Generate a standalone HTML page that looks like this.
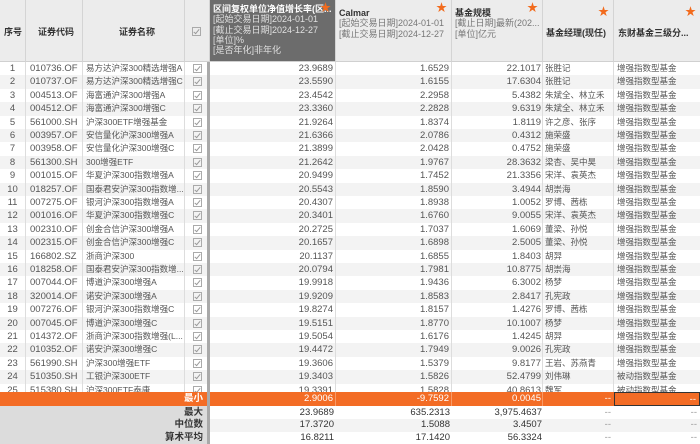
<!DOCTYPE html>
<html><head><meta charset="utf-8"><style>
*{margin:0;padding:0;box-sizing:border-box}
body{width:700px;height:444px;overflow:hidden;background:#fff;font-family:"Liberation Sans","Noto Sans CJK SC",sans-serif;font-size:9.5px;color:#555;position:relative}
.hd{position:absolute;top:0;height:62px;background:#ececec;border-right:1px solid #d4d4d4;border-bottom:1px solid #d0d0d0;white-space:nowrap;overflow:hidden;font-size:9px}
.hd b{font-weight:bold;color:#333}
.star{position:absolute;top:3px;right:4px;color:#f26b1d;font-size:11px}
.r{position:absolute;left:0;width:700px;height:13.4px;line-height:13.4px;white-space:nowrap}
.r span{position:absolute;top:0;height:100%;overflow:hidden}
.c0{left:0;width:26px;text-align:center;border-right:1px solid #ddd}
.c1{left:26px;width:57px;padding-left:4px;border-right:1px solid #ddd}
.c2{left:83px;width:102px;padding-left:3px;border-right:1px solid #ddd;font-size:8.5px}
.c3{left:185px;width:25px;border-right:3px solid #a9a9a9}
.c4{left:210px;width:126px;text-align:right;padding-right:2px;border-right:1px solid #ddd}
.c5{left:336px;width:116px;text-align:right;padding-right:2px;border-right:1px solid #ddd}
.c6{left:452px;width:91px;text-align:right;padding-right:1px;border-right:1px solid #ddd}
.c7{left:543px;width:71px;padding-left:2px;border-right:1px solid #ddd;font-size:8.5px}
.c8{left:614px;width:86px;padding-left:3px;font-size:8.5px}
.cb{display:inline-block;width:9px;height:9px;border:1px solid #aaa;margin:2px 0 0 8px;position:relative}
.cb:after{content:"";position:absolute;left:2px;top:0px;width:2px;height:5px;border:solid #999;border-width:0 1px 1px 0;transform:rotate(40deg)}
#body{position:absolute;top:62px;left:0;width:700px;height:330px;overflow:hidden}
.f{position:absolute;left:0;width:700px;white-space:nowrap}
.f span{position:absolute;top:0;height:100%;text-align:right}
.h9{line-height:10.3px;font-size:9px}
</style></head><body>
<div class="hd" style="left:0;width:26px"><b style="position:absolute;top:25px;left:4px">序号</b></div>
<div class="hd" style="left:26px;width:57px"><b style="position:absolute;top:25px;left:12px">证券代码</b></div>
<div class="hd" style="left:83px;width:102px"><b style="position:absolute;top:25px;left:36px">证券名称</b></div>
<div class="hd" style="left:185px;width:25px"><span class="cb" style="position:absolute;top:25px;left:-1px;margin:2px 0 0 8px"></span></div>
<div class="hd h9" style="left:210px;width:126px;background:#6c6c6c;color:#e0e0e0;padding:4px 0 0 3px"><b style="color:#fff">区间复权单位净值增长率(区...</b><br>[起始交易日期]2024-01-01<br>[截止交易日期]2024-12-27<br>[单位]%<br>[是否年化]非年化<span class="star">★</span></div>
<div class="hd h9" style="left:336px;width:116px;padding:8px 0 0 3px;color:#777"><b>Calmar</b><br>[起始交易日期]2024-01-01<br>[截止交易日期]2024-12-27<span class="star">★</span></div>
<div class="hd h9" style="left:452px;width:91px;padding:8px 0 0 3px;color:#777"><b>基金规模</b><br>[截止日期]最新(202...<br>[单位]亿元<span class="star">★</span></div>
<div class="hd" style="left:543px;width:71px"><b style="position:absolute;top:26px;left:3px">基金经理(现任)</b><span class="star">★</span></div>
<div class="hd" style="left:614px;width:86px;border-right:none"><b style="position:absolute;top:26px;left:4px">东财基金三级分...</b><span class="star">★</span></div>
<div id="body">
<div class="r" style="top:0"><span class="c0">1</span><span class="c1">010736.OF</span><span class="c2">易方达沪深300精选增强A</span><span class="c3"><i class="cb"></i></span><span class="c4">23.9689</span><span class="c5">1.6529</span><span class="c6">22.1017</span><span class="c7">张胜记</span><span class="c8">增强指数型基金</span></div>
<div class="r" style="top:13.4px;background:#f3f3f3"><span class="c0">2</span><span class="c1">010737.OF</span><span class="c2">易方达沪深300精选增强C</span><span class="c3"><i class="cb"></i></span><span class="c4">23.5590</span><span class="c5">1.6155</span><span class="c6">17.6304</span><span class="c7">张胜记</span><span class="c8">增强指数型基金</span></div>
<div class="r" style="top:26.8px"><span class="c0">3</span><span class="c1">004513.OF</span><span class="c2">海富通沪深300增强A</span><span class="c3"><i class="cb"></i></span><span class="c4">23.4542</span><span class="c5">2.2958</span><span class="c6">5.4382</span><span class="c7">朱斌全、林立禾</span><span class="c8">增强指数型基金</span></div>
<div class="r" style="top:40.2px;background:#f3f3f3"><span class="c0">4</span><span class="c1">004512.OF</span><span class="c2">海富通沪深300增强C</span><span class="c3"><i class="cb"></i></span><span class="c4">23.3360</span><span class="c5">2.2828</span><span class="c6">9.6319</span><span class="c7">朱斌全、林立禾</span><span class="c8">增强指数型基金</span></div>
<div class="r" style="top:53.6px"><span class="c0">5</span><span class="c1">561000.SH</span><span class="c2">沪深300ETF增强基金</span><span class="c3"><i class="cb"></i></span><span class="c4">21.9264</span><span class="c5">1.8374</span><span class="c6">1.8119</span><span class="c7">许之彦、张序</span><span class="c8">增强指数型基金</span></div>
<div class="r" style="top:67px;background:#f3f3f3"><span class="c0">6</span><span class="c1">003957.OF</span><span class="c2">安信量化沪深300增强A</span><span class="c3"><i class="cb"></i></span><span class="c4">21.6366</span><span class="c5">2.0786</span><span class="c6">0.4312</span><span class="c7">施荣盛</span><span class="c8">增强指数型基金</span></div>
<div class="r" style="top:80.4px"><span class="c0">7</span><span class="c1">003958.OF</span><span class="c2">安信量化沪深300增强C</span><span class="c3"><i class="cb"></i></span><span class="c4">21.3899</span><span class="c5">2.0428</span><span class="c6">0.4752</span><span class="c7">施荣盛</span><span class="c8">增强指数型基金</span></div>
<div class="r" style="top:93.8px;background:#f3f3f3"><span class="c0">8</span><span class="c1">561300.SH</span><span class="c2">300增强ETF</span><span class="c3"><i class="cb"></i></span><span class="c4">21.2642</span><span class="c5">1.9767</span><span class="c6">28.3632</span><span class="c7">梁杏、吴中昊</span><span class="c8">增强指数型基金</span></div>
<div class="r" style="top:107.2px"><span class="c0">9</span><span class="c1">001015.OF</span><span class="c2">华夏沪深300指数增强A</span><span class="c3"><i class="cb"></i></span><span class="c4">20.9499</span><span class="c5">1.7452</span><span class="c6">21.3356</span><span class="c7">宋洋、袁英杰</span><span class="c8">增强指数型基金</span></div>
<div class="r" style="top:120.6px;background:#f3f3f3"><span class="c0">10</span><span class="c1">018257.OF</span><span class="c2">国泰君安沪深300指数增...</span><span class="c3"><i class="cb"></i></span><span class="c4">20.5543</span><span class="c5">1.8590</span><span class="c6">3.4944</span><span class="c7">胡崇海</span><span class="c8">增强指数型基金</span></div>
<div class="r" style="top:134px"><span class="c0">11</span><span class="c1">007275.OF</span><span class="c2">银河沪深300指数增强A</span><span class="c3"><i class="cb"></i></span><span class="c4">20.4307</span><span class="c5">1.8938</span><span class="c6">1.0052</span><span class="c7">罗博、茜栋</span><span class="c8">增强指数型基金</span></div>
<div class="r" style="top:147.4px;background:#f3f3f3"><span class="c0">12</span><span class="c1">001016.OF</span><span class="c2">华夏沪深300指数增强C</span><span class="c3"><i class="cb"></i></span><span class="c4">20.3401</span><span class="c5">1.6760</span><span class="c6">9.0055</span><span class="c7">宋洋、袁英杰</span><span class="c8">增强指数型基金</span></div>
<div class="r" style="top:160.8px"><span class="c0">13</span><span class="c1">002310.OF</span><span class="c2">创金合信沪深300增强A</span><span class="c3"><i class="cb"></i></span><span class="c4">20.2725</span><span class="c5">1.7037</span><span class="c6">1.6069</span><span class="c7">董梁、孙悦</span><span class="c8">增强指数型基金</span></div>
<div class="r" style="top:174.2px;background:#f3f3f3"><span class="c0">14</span><span class="c1">002315.OF</span><span class="c2">创金合信沪深300增强C</span><span class="c3"><i class="cb"></i></span><span class="c4">20.1657</span><span class="c5">1.6898</span><span class="c6">2.5005</span><span class="c7">董梁、孙悦</span><span class="c8">增强指数型基金</span></div>
<div class="r" style="top:187.6px"><span class="c0">15</span><span class="c1">166802.SZ</span><span class="c2">浙商沪深300</span><span class="c3"><i class="cb"></i></span><span class="c4">20.1137</span><span class="c5">1.6855</span><span class="c6">1.8403</span><span class="c7">胡羿</span><span class="c8">增强指数型基金</span></div>
<div class="r" style="top:201px;background:#f3f3f3"><span class="c0">16</span><span class="c1">018258.OF</span><span class="c2">国泰君安沪深300指数增...</span><span class="c3"><i class="cb"></i></span><span class="c4">20.0794</span><span class="c5">1.7981</span><span class="c6">10.8775</span><span class="c7">胡崇海</span><span class="c8">增强指数型基金</span></div>
<div class="r" style="top:214.4px"><span class="c0">17</span><span class="c1">007044.OF</span><span class="c2">博道沪深300增强A</span><span class="c3"><i class="cb"></i></span><span class="c4">19.9918</span><span class="c5">1.9436</span><span class="c6">6.3002</span><span class="c7">杨梦</span><span class="c8">增强指数型基金</span></div>
<div class="r" style="top:227.8px;background:#f3f3f3"><span class="c0">18</span><span class="c1">320014.OF</span><span class="c2">诺安沪深300增强A</span><span class="c3"><i class="cb"></i></span><span class="c4">19.9209</span><span class="c5">1.8583</span><span class="c6">2.8417</span><span class="c7">孔宪政</span><span class="c8">增强指数型基金</span></div>
<div class="r" style="top:241.2px"><span class="c0">19</span><span class="c1">007276.OF</span><span class="c2">银河沪深300指数增强C</span><span class="c3"><i class="cb"></i></span><span class="c4">19.8274</span><span class="c5">1.8157</span><span class="c6">1.4276</span><span class="c7">罗博、茜栋</span><span class="c8">增强指数型基金</span></div>
<div class="r" style="top:254.6px;background:#f3f3f3"><span class="c0">20</span><span class="c1">007045.OF</span><span class="c2">博道沪深300增强C</span><span class="c3"><i class="cb"></i></span><span class="c4">19.5151</span><span class="c5">1.8770</span><span class="c6">10.1007</span><span class="c7">杨梦</span><span class="c8">增强指数型基金</span></div>
<div class="r" style="top:268px"><span class="c0">21</span><span class="c1">014372.OF</span><span class="c2">浙商沪深300指数增强(L...</span><span class="c3"><i class="cb"></i></span><span class="c4">19.5054</span><span class="c5">1.6176</span><span class="c6">1.4245</span><span class="c7">胡羿</span><span class="c8">增强指数型基金</span></div>
<div class="r" style="top:281.4px;background:#f3f3f3"><span class="c0">22</span><span class="c1">010352.OF</span><span class="c2">诺安沪深300增强C</span><span class="c3"><i class="cb"></i></span><span class="c4">19.4472</span><span class="c5">1.7949</span><span class="c6">9.0026</span><span class="c7">孔宪政</span><span class="c8">增强指数型基金</span></div>
<div class="r" style="top:294.8px"><span class="c0">23</span><span class="c1">561990.SH</span><span class="c2">沪深300增强ETF</span><span class="c3"><i class="cb"></i></span><span class="c4">19.3606</span><span class="c5">1.5379</span><span class="c6">9.8177</span><span class="c7">王岩、苏燕青</span><span class="c8">增强指数型基金</span></div>
<div class="r" style="top:308.2px;background:#f3f3f3"><span class="c0">24</span><span class="c1">510350.SH</span><span class="c2">工银沪深300ETF</span><span class="c3"><i class="cb"></i></span><span class="c4">19.3403</span><span class="c5">1.5826</span><span class="c6">52.4799</span><span class="c7">刘伟琳</span><span class="c8">被动指数型基金</span></div>
<div class="r" style="top:321.6px"><span class="c0">25</span><span class="c1">515380.SH</span><span class="c2">沪深300ETF泰康</span><span class="c3"><i class="cb"></i></span><span class="c4">19.3391</span><span class="c5">1.5828</span><span class="c6">40.8613</span><span class="c7">魏军</span><span class="c8">被动指数型基金</span></div>
</div>
<div class="f" style="top:392px;height:13.6px;line-height:13.6px;background:#f36c25;color:#fff">
<span style="left:0;width:210px;padding-right:4px;font-weight:bold;border-right:3px solid #a9a9a9">最小</span><span style="left:210px;width:126px;padding-right:2px;border-right:1px solid #f89a66">2.9006</span><span style="left:336px;width:116px;padding-right:2px;border-right:1px solid #f89a66">-9.7592</span><span style="left:452px;width:91px;padding-right:1px;border-right:1px solid #f89a66">0.0045</span><span style="left:543px;width:71px;padding-right:3px">--</span><span style="left:614px;width:86px;padding-right:3px;border:1px solid #333">--</span></div>
<div class="f" style="top:405.6px;height:13.2px;line-height:13.2px;background:#fff;color:#333">
<span style="left:0;width:210px;padding-right:4px;font-weight:bold;background:#dcdcdc;border-right:3px solid #a9a9a9">最大</span><span style="left:210px;width:126px;padding-right:2px">23.9689</span><span style="left:336px;width:116px;padding-right:2px">635.2313</span><span style="left:452px;width:91px;padding-right:1px">3,975.4637</span><span style="left:543px;width:71px;padding-right:3px;color:#999">--</span><span style="left:614px;width:86px;padding-right:3px;color:#999">--</span></div>
<div class="f" style="top:418.8px;height:12.8px;line-height:12.8px;background:#f3f3f3;color:#333">
<span style="left:0;width:210px;padding-right:4px;font-weight:bold;background:#dcdcdc;border-right:3px solid #a9a9a9">中位数</span><span style="left:210px;width:126px;padding-right:2px">17.3720</span><span style="left:336px;width:116px;padding-right:2px">1.5088</span><span style="left:452px;width:91px;padding-right:1px">3.4507</span><span style="left:543px;width:71px;padding-right:3px;color:#999">--</span><span style="left:614px;width:86px;padding-right:3px;color:#999">--</span></div>
<div class="f" style="top:431.6px;height:12.4px;line-height:12.4px;background:#fff;color:#333">
<span style="left:0;width:210px;padding-right:4px;font-weight:bold;background:#dcdcdc;border-right:3px solid #a9a9a9">算术平均</span><span style="left:210px;width:126px;padding-right:2px">16.8211</span><span style="left:336px;width:116px;padding-right:2px">17.1420</span><span style="left:452px;width:91px;padding-right:1px">56.3324</span><span style="left:543px;width:71px;padding-right:3px;color:#999">--</span><span style="left:614px;width:86px;padding-right:3px;color:#999">--</span></div>
</body></html>
